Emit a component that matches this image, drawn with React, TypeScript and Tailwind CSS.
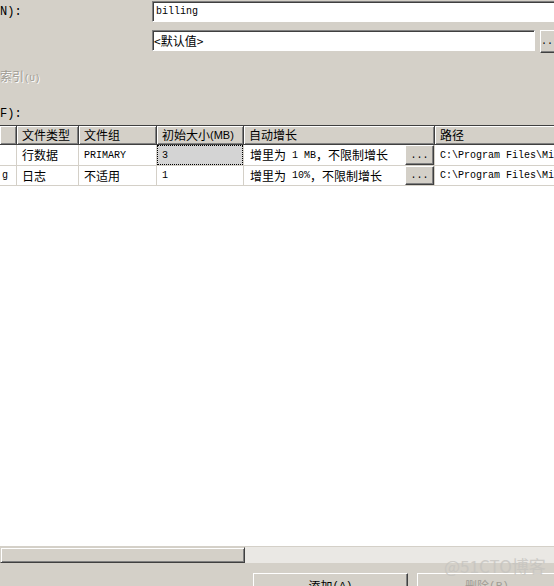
const cjk = "font-['Noto_Sans_CJK_SC',sans-serif]";
const mono = "font-['Liberation_Mono','Noto_Sans_CJK_SC',monospace]";

const cols = [17, 62, 78, 87, 191, 140];
const headers = ["", "文件类型", "文件组", "初始大小(MB)", "自动增长", "路径"];

function RaisedButton({ className, children }: { className: string; children?: React.ReactNode }) {
  return (
    <div
      className={`shrink-0 flex items-end justify-center bg-[#d4d0c8] border-t border-l border-white border-r border-b border-r-[#404040] border-b-[#404040] shadow-[inset_-1px_-1px_0_#808080] ${className}`}
    >
      {children}
    </div>
  );
}

function GrowCell({ text }: { text: React.ReactNode }) {
  return (
    <div className="flex h-full items-stretch">
      <div className="flex-1 pl-[6px] flex items-center whitespace-nowrap">{text}</div>
      <RaisedButton className={`w-[29px] h-full ${mono} text-[10px] leading-[14px] pb-[1px]`}>...</RaisedButton>
    </div>
  );
}

const rows: { h: number; cells: React.ReactNode[] }[] = [
  {
    h: 21,
    cells: [
      "",
      <span className={`${cjk} pl-[5px]`}>行数据</span>,
      <span className={`${mono} text-[10px] pl-[5px]`}>PRIMARY</span>,
      "focus",
      <GrowCell
        text={
          <>
            <span className={cjk}>增里为</span>
            <span className={`${mono} text-[10px]`}>&nbsp;1 MB</span>
            <span className={cjk}>，不限制增长</span>
          </>
        }
      />,
      <span className={`${mono} text-[10px] pl-[5px]`}>C:\Program Files\Mi</span>,
    ],
  },
  {
    h: 20,
    cells: [
      <span className={`${mono} text-[10px] pl-[2px]`}>g</span>,
      <span className={`${cjk} pl-[5px]`}>日志</span>,
      <span className={`${cjk} pl-[5px]`}>不适用</span>,
      <span className={`${mono} text-[10px] pl-[5px]`}>1</span>,
      <GrowCell
        text={
          <>
            <span className={cjk}>增里为</span>
            <span className={`${mono} text-[10px]`}>&nbsp;10%</span>
            <span className={cjk}>，不限制增长</span>
          </>
        }
      />,
      <span className={`${mono} text-[10px] pl-[5px]`}>C:\Program Files\Mi</span>,
    ],
  },
];

export default function App() {
  return (
    <div className={`relative w-[554px] h-[586px] overflow-hidden bg-[#d4d0c8] text-[12px] text-black ${cjk}`}>
      {/* top form */}
      <div className="h-[125px] flex flex-col">
        <div className="flex pt-[1px]">
          <div className={`shrink-0 w-[152px] ${mono} text-[12px] leading-[21px] pt-[1px]`}>N):</div>
          <div className="shrink-0 w-[410px] h-[21px] bg-white border-t border-l border-[#808080] shadow-[inset_1px_1px_0_#404040] border-b border-r border-b-white border-r-white flex items-center pl-[3px]">
            <span className={`${mono} text-[10px]`}>billing</span>
          </div>
        </div>
        <div className="flex mt-[7px]">
          <div className="shrink-0 w-[152px]" />
          <div className="shrink-0 w-[383px] h-[21px] bg-white border-t border-l border-[#808080] shadow-[inset_1px_1px_0_#404040] border-b border-r border-b-white border-r-white flex items-center pl-[1px]">
            <span className="leading-[14px]">&lt;默认值&gt;</span>
          </div>
          <RaisedButton className={`ml-[5px] w-[20px] h-[23px] ${mono} text-[10px] leading-[14px] pb-[3px]`}>...</RaisedButton>
        </div>
        <div className="mt-[15px] leading-[16px] text-[#a09c94] [text-shadow:1px_1px_0_#fff]">
          索引<span className={`${mono} text-[9px]`}>(U)</span>
        </div>
        <div className={`mt-[19px] leading-[16px] ${mono} text-[12px]`}>F):</div>
      </div>

      {/* grid */}
      <div className="h-[421px] bg-white border-t border-[#404040] overflow-hidden">
        <div className="flex h-[19px]">
          {headers.map((h, i) => (
            <div
              key={i}
              style={{ width: cols[i] }}
              className="shrink-0 h-full bg-[#d4d0c8] border-r border-b border-[#404040] shadow-[inset_1px_1px_0_#fff,inset_-1px_-1px_0_#808080] flex items-center pl-[5px] whitespace-nowrap leading-[14px]"
            >
              {h === "初始大小(MB)" ? (
                <>
                  初始大小<span className="font-['Liberation_Sans',sans-serif] text-[11px]">(MB)</span>
                </>
              ) : (
                h
              )}
            </div>
          ))}
        </div>
        {rows.map((r, ri) => (
          <div key={ri} className="flex" style={{ height: r.h }}>
            {r.cells.map((c, ci) => (
              <div
                key={ci}
                style={{ width: cols[ci] }}
                className={`shrink-0 h-full border-r border-b border-[#d4d0c8] overflow-hidden whitespace-nowrap ${
                  ci === 4 ? "" : "flex items-center"
                }`}
              >
                {c === "focus" ? (
                  <div className="h-full w-full bg-[#d4d4d4] outline-1 outline-dotted outline-black -outline-offset-1 flex items-center pl-[5px]">
                    <span className={`${mono} text-[10px]`}>3</span>
                  </div>
                ) : (
                  c
                )}
              </div>
            ))}
          </div>
        ))}
      </div>

      {/* horizontal scrollbar */}
      <div className="h-[17px] flex bg-[#eae8e4] border-t border-[#d4d0c8]">
        <div className="w-[245px] h-full bg-[#d4d0c8] border-t border-l border-[#d4d0c8] border-r border-b border-r-[#404040] border-b-[#404040] shadow-[inset_1px_1px_0_#fff,inset_-1px_-1px_0_#808080]" />
      </div>

      {/* buttons */}
      <div className="flex mt-[10px]">
        <div className="shrink-0 w-[253px]" />
        <RaisedButton className="w-[155px] h-[28px] !items-start pt-[4px] leading-[16px]">
          添加<span className={`${mono} text-[11px]`}>(A)</span>
        </RaisedButton>
        <div className="shrink-0 w-[9px]" />
        <RaisedButton className="w-[140px] h-[28px] !items-start pt-[4px] leading-[16px] text-[#a09c94]">
          删除<span className={`${mono} text-[11px]`}>(R)</span>
        </RaisedButton>
      </div>

      {/* watermark */}
      <div className="absolute left-[444px] top-[556px] text-[17px] leading-[20px] text-[#c6c4c0] font-['Noto_Sans_CJK_SC',sans-serif] opacity-80">
        @51CTO博客
      </div>
    </div>
  );
}
